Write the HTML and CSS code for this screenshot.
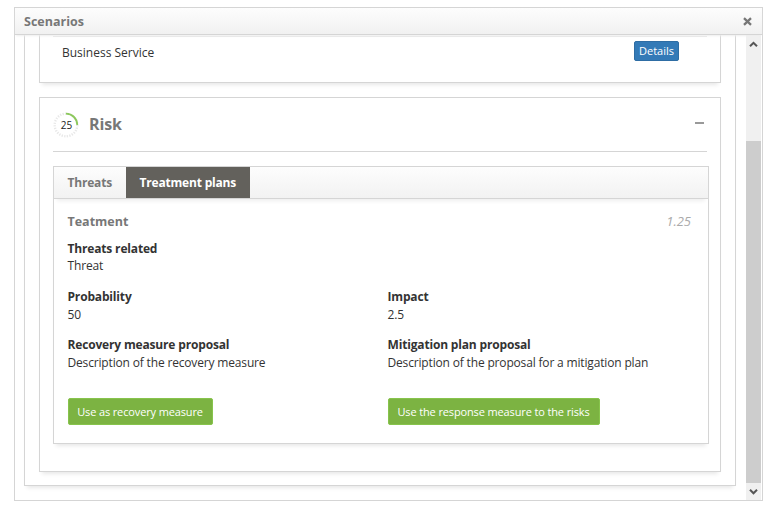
FILE: index.html
```html
<!DOCTYPE html>
<html lang="en">
<head>
<meta charset="utf-8">
<title>Scenarios</title>
<link rel="stylesheet" href="styles.css">
</head>
<body>
<section class="dialog">
  <header class="dialog-title">
    <h1>Scenarios</h1>
    <svg class="close" width="9" height="9" viewBox="0 0 9 9"><path d="M1 1.2L8 7.8M8 1.2L1 7.8"/></svg>
  </header>
  <div class="dialog-body">
    <div class="outer">
      <div class="card service">
        <div class="service-row">
          <span>Business Service</span>
          <button class="details">Details</button>
        </div>
      </div>
      <div class="card risk">
        <div class="risk-head">
          <div class="gauge">
            <svg width="26" height="26" viewBox="0 0 26 26">
              <circle class="ticks" cx="13" cy="13" r="11.3"/>
              <path class="arc" d="M13 1.7A11.3 11.3 0 0 1 24.3 13"/>
            </svg>
            <span>25</span>
          </div>
          <h2>Risk</h2>
          <i class="minus"></i>
        </div>
        <div class="tabs-panel">
          <nav class="tabs">
            <span class="tab">Threats</span>
            <span class="tab active">Treatment plans</span>
          </nav>
          <div class="plan">
            <div class="plan-head"><h3>Teatment</h3><em>1.25</em></div>
            <dl class="grid">
              <div class="wide"><dt>Threats related</dt><dd>Threat</dd></div>
              <div><dt>Probability</dt><dd>50</dd></div>
              <div><dt>Impact</dt><dd>2.5</dd></div>
              <div><dt>Recovery measure proposal</dt><dd>Description of the recovery measure</dd></div>
              <div><dt>Mitigation plan proposal</dt><dd>Description of the proposal for a mitigation plan</dd></div>
            </dl>
            <div class="actions">
              <div><button class="use">Use as recovery measure</button></div>
              <div><button class="use second">Use the response measure to the risks</button></div>
            </div>
          </div>
        </div>
      </div>
    </div>
    <div class="scrollbar">
      <svg width="15" height="17" viewBox="0 0 15 17"><path d="M4 11.3L7.5 7.8L11 11.3"/></svg>
      <div class="track"><div class="thumb"></div></div>
      <svg width="15" height="17" viewBox="0 0 15 17"><path d="M4 6.8L7.5 10.3L11 6.8"/></svg>
    </div>
  </div>
</section>
</body>
</html>
```
FILE: styles.css
```css
* { box-sizing: border-box; }
body {
  margin: 0;
  padding: 7px 8px 0 14px;
  background: #fff;
  color: #333;
  font: 12px/18px "Open Sans", sans-serif;
}
h1, h2, h3, dl, dd { margin: 0; }
button {
  display: block;
  padding: 0;
  border: 1px solid;
  border-radius: 2px;
  color: #fff;
  font: 11px/16px "Open Sans", sans-serif;
  white-space: nowrap;
}
.dialog {
  display: flex;
  flex-direction: column;
  width: 749px;
  height: 494px;
  border: 1px solid #d5d5d5;
}
.dialog-title {
  position: relative;
  z-index: 1;
  display: flex;
  flex: none;
  align-items: center;
  justify-content: space-between;
  height: 27px;
  padding: 0 10px 0 9px;
  border-bottom: 1px solid #d5d5d5;
  background: linear-gradient(#fdfdfd, #f1f1f1);
  box-shadow: 0 2px 2px -1px #eee;
}
.dialog-title h1 { padding-top: 2px; color: #777; font-size: 12.5px; line-height: 24px; }
.close { fill: none; stroke: #777; stroke-width: 2.3; }
.dialog-body {
  display: flex;
  flex: 1;
  justify-content: space-between;
  min-height: 0;
  padding-left: 9px;
}
.outer {
  width: 712px;
  height: 451px;
  padding: 0 14px;
  border: 1px solid #d5d5d5;
  border-top: 0;
  box-shadow: 0 5px 4px -3px #e8e8e8;
}
.card {
  width: 682px;
  border: 1px solid #d5d5d5;
  box-shadow: 0 5px 4px -3px #e8e8e8;
}
.service { height: 48px; padding: 1px 13px 0; border-top: 0; }
.service-row {
  display: flex;
  justify-content: space-between;
  padding: 4px 28px 0 9px;
  border-top: 1px solid #e6e6e6;
}
.service-row span { line-height: 24px; }
.details {
  width: 45px;
  height: 20px;
  border-color: #2e6da4;
  background: #337ab7;
}
.risk { height: 375px; margin-top: 14px; padding: 0 13px; }
.risk-head {
  display: flex;
  align-items: center;
  height: 54px;
  border-bottom: 1px solid #d5d5d5;
}
.gauge { display: grid; place-items: center; width: 26px; height: 26px; }
.gauge > * { grid-area: 1 / 1; }
.gauge span { padding-left: 1px; color: #222; font-size: 10px; line-height: 14px; }
.gauge svg { fill: none; }
.ticks { stroke: #e8e8e8; stroke-width: 2.4; stroke-dasharray: 1.3 1.3; }
.arc { stroke: #8cc85c; stroke-width: 1.8; }
.risk h2 { flex: 1; margin: 0 0 2px 10px; color: #777; font-size: 16px; line-height: 24px; letter-spacing: -0.1px; }
.minus { width: 9px; height: 2px; margin: 0 3px 4px 0; background: #999; }
.tabs-panel {
  width: 656px;
  height: 278px;
  margin-top: 14px;
  border: 1px solid #d5d5d5;
  box-shadow: 0 5px 4px -3px #e8e8e8;
}
.tabs {
  display: flex;
  height: 32px;
  border-bottom: 1px solid #d5d5d5;
  background: linear-gradient(#fdfdfd, #f2f2f2);
  box-shadow: 0 5px 4px -3px #eee;
  color: #777;
  font-weight: 700;
  line-height: 31px;
  letter-spacing: -0.19px;
}
.tab { width: 72px; padding-left: 13.5px; white-space: nowrap; }
.tab.active { width: 124px; background: #63615c; color: #fff; }
.plan { padding: 14px 14px 0 13.5px; }
.plan-head { display: flex; justify-content: space-between; height: 18px; color: #777; }
.plan-head h3 { font-size: 12.5px; line-height: 18px; }
.plan-head em { margin-right: 3px; color: #aaa; font-size: 13px; line-height: 16px; }
.grid {
  display: grid;
  grid-template-columns: 320px 1fr;
  row-gap: 13px;
  margin-top: 9px;
}
.grid > div { height: 35px; white-space: nowrap; letter-spacing: -0.165px; }
.wide { grid-column: 1 / -1; }
dt { font-weight: 700; line-height: 17px; }
dd { line-height: 20px; }
.wide dd { line-height: 18px; }
.actions { display: grid; grid-template-columns: 320px 1fr; margin-top: 27px; }
.use {
  width: 145px;
  height: 27px;
  border-color: #87c44c;
  background: #7cb342;
  letter-spacing: -0.13px;
}
.use.second { width: 212px; }
.scrollbar {
  display: flex;
  flex-direction: column;
  width: 16px;
  padding-right: 1px;
  background: linear-gradient(90deg, #f0f0f0 15px, #fff 15px);
}
.scrollbar svg { fill: none; stroke: #555; stroke-width: 2; }
.track { flex: 1; padding-top: 89px; }
.thumb { height: 342px; background: #cdcdcd; }
```
